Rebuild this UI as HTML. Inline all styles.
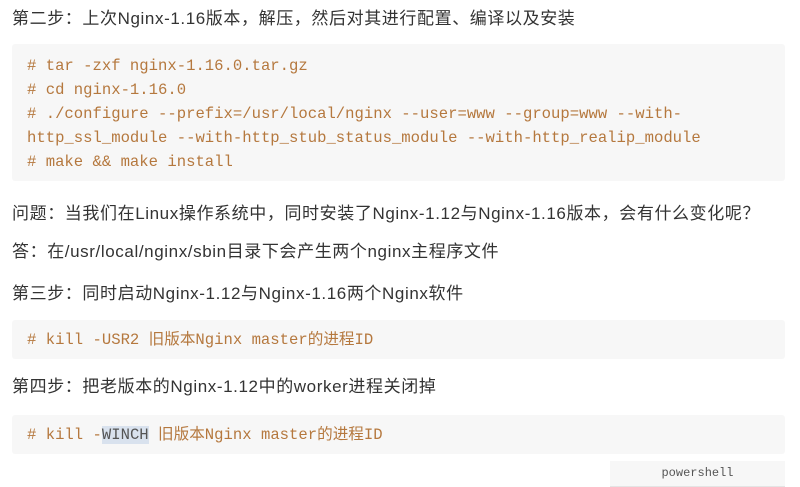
<!DOCTYPE html>
<html><head><meta charset="utf-8"><style>
body{margin:0;width:800px;height:487px;background:#fff;position:relative;overflow:hidden;font-family:"Liberation Sans","Noto Sans CJK SC",sans-serif;color:#333;}
.p{position:absolute;left:12px;font-size:17px;letter-spacing:0.6px;line-height:20px;white-space:nowrap;}
.c{position:absolute;left:12px;width:773px;background:#f7f7f7;border-radius:3px;}
.m{position:absolute;left:27px;font-family:"Liberation Mono","Noto Sans CJK SC",monospace;font-size:15.6px;color:#b5783e;white-space:pre;line-height:24px;}
.sel{background:#d9e2ee;color:#555;}
.ps{position:absolute;left:610px;top:461px;width:175px;height:25px;background:#f7f7f7;border-bottom:1px solid #e4e4e4;font-family:"Liberation Mono",monospace;font-size:12px;color:#555;text-align:center;line-height:25px;}
</style></head><body>
<div class="p" style="top:9px">第二步：上次Nginx-1.16版本，解压，然后对其进行配置、编译以及安装</div>
<div class="c" style="top:44px;height:137px"></div>
<div class="m" style="top:54px"># tar -zxf nginx-1.16.0.tar.gz
# cd nginx-1.16.0
# ./configure --prefix=/usr/local/nginx --user=www --group=www --with-
http_ssl_module --with-http_stub_status_module --with-http_realip_module
# make &amp;&amp; make install</div>
<div class="p" style="top:204px">问题：当我们在Linux操作系统中，同时安装了Nginx-1.12与Nginx-1.16版本，会有什么变化呢？</div>
<div class="p" style="top:242px">答：在/usr/local/nginx/sbin目录下会产生两个nginx主程序文件</div>
<div class="p" style="top:284px">第三步：同时启动Nginx-1.12与Nginx-1.16两个Nginx软件</div>
<div class="c" style="top:320px;height:39px"></div>
<div class="m" style="top:328px"># kill -USR2 旧版本Nginx master的进程ID</div>
<div class="p" style="top:377px">第四步：把老版本的Nginx-1.12中的worker进程关闭掉</div>
<div class="c" style="top:415px;height:39px"></div>
<div class="m" style="top:423px"># kill -<span class="sel">WINCH</span> 旧版本Nginx master的进程ID</div>
<div class="ps">powershell</div>
</body></html>
